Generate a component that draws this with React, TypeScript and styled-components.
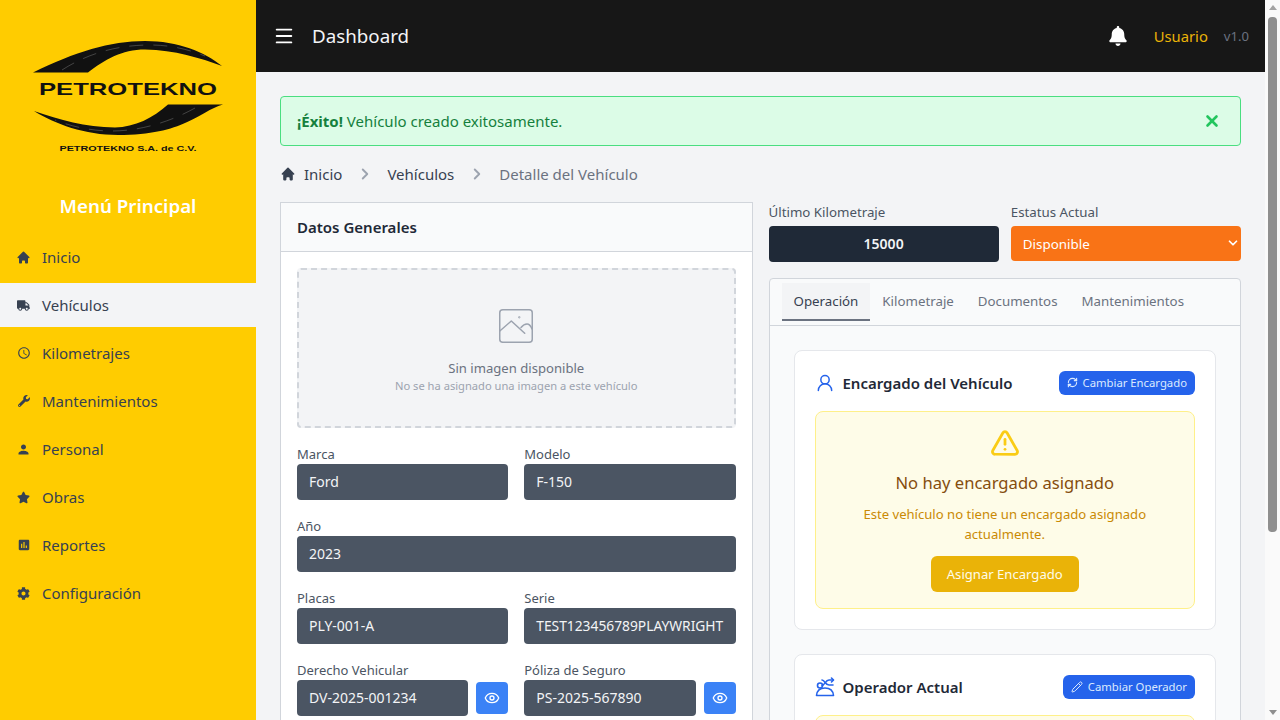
import React from 'react';
import styled, { createGlobalStyle } from 'styled-components';
import { ChevronDown, ChevronRight, Eye, Menu, Pencil, RefreshCw, TriangleAlert, UserRound, X } from 'lucide-react';
import { FaBell, FaCog, FaStar, FaTruck, FaWrench } from 'react-icons/fa';
import { HiHome } from 'react-icons/hi';
import { MdAccessTime, MdAssessment, MdPerson } from 'react-icons/md';

const GlobalStyle = createGlobalStyle`
    * {
        box-sizing: border-box;
    }

    body {
        margin: 0;
        background: #f3f4f6;
        font-family: 'Noto Sans', sans-serif;
        color: #374151;
    }
`;

const navItems = [
    { label: 'Inicio', icon: <HiHome size={15} /> },
    { label: 'Vehículos', icon: <FaTruck size={13} />, active: true },
    { label: 'Kilometrajes', icon: <MdAccessTime size={14} /> },
    { label: 'Mantenimientos', icon: <FaWrench size={12} /> },
    { label: 'Personal', icon: <MdPerson size={15} /> },
    { label: 'Obras', icon: <FaStar size={13} /> },
    { label: 'Reportes', icon: <MdAssessment size={14} /> },
    { label: 'Configuración', icon: <FaCog size={13} /> },
];

const Logo = () => (
    <svg width="256" height="170" viewBox="0 0 256 170">
        <path d="M33 72.5C75 52 110 41 145 41C178 41 205 52 222 66C200 58 175 50 145 49.5C122 49.5 104 60 88 72.5Z" fill="#111" />
        <path d="M223 104.5C198 112 185 135 118 135C85 135 55 124 34 111C60 120 85 127 115 127.5C135 127 153 118 168 104.5Z" fill="#111" />
        <path d="M62 70C90 52 120 45 150 45C172 45 190 50 205 56" fill="none" stroke="#777" strokeWidth="0.5" strokeDasharray="14 10" />
        <path d="M195 108C170 122 140 131 112 131C90 131 70 126 55 120" fill="none" stroke="#777" strokeWidth="0.5" strokeDasharray="14 10" />
        <text x="128" y="95" textAnchor="middle" textLength="178" lengthAdjust="spacingAndGlyphs" fontFamily="Liberation Sans" fontWeight="700" fontSize="17" fill="#111">
            PETROTEKNO
        </text>
        <text x="128" y="151" textAnchor="middle" textLength="137" lengthAdjust="spacingAndGlyphs" fontFamily="Liberation Sans" fontWeight="700" fontSize="8" fill="#111">
            PETROTEKNO S.A. de C.V.
        </text>
    </svg>
);

const NoImageIcon = () => (
    <svg width="34" height="34" viewBox="0 0 34 34" fill="none" stroke="#9ca3af" strokeWidth="1.5" strokeLinecap="round" strokeLinejoin="round">
        <rect x="0.75" y="0.75" width="32.5" height="32.5" rx="3" />
        <path d="M0.8 22L12.3 12L25.7 24.3" />
        <path d="M22 18.5C24 16 26 15 28 15C30 15 32 17.5 33 20" />
        <circle cx="20.3" cy="8.3" r="0.4" />
    </svg>
);

const OperatorIcon = () => (
    <svg width="20" height="20" viewBox="0 0 20 20" fill="none" stroke="#2563eb" strokeWidth="1.6" strokeLinecap="round" strokeLinejoin="round">
        <path d="M1.5 18.5C2 13 6 11 10 11C14 11 18 13 18.5 18.5Z" />
        <circle cx="5" cy="8.5" r="2.5" />
        <path d="M7 3C10 3 10 8 14 8H18" />
        <path d="M7 8.5C9.5 8.5 10.5 3 14 3H18" />
        <path d="M16.5 1L18.5 3L16.5 5" />
    </svg>
);

const Warning = ({ title, text, action }: { title: string; text: string; action: string }) => (
    <WarningBox>
        <TriangleAlert size={30} color="#facc15" strokeWidth={2.2} />
        <WarningTitle>{title}</WarningTitle>
        <WarningText>{text}</WarningText>
        <WarningButton>{action}</WarningButton>
    </WarningBox>
);

const App = () => {
    return (
        <Page>
            <GlobalStyle />
            <Sidebar>
                <LogoWrap>
                    <Logo />
                </LogoWrap>
                <MenuTitle>Menú Principal</MenuTitle>
                <Nav>
                    {navItems.map((item) => (
                        <NavItem key={item.label} $active={item.active}>
                            <NavIcon>{item.icon}</NavIcon>
                            {item.label}
                        </NavItem>
                    ))}
                </Nav>
            </Sidebar>
            <Main>
                <Topbar>
                    <Menu size={22} color="#fff" strokeWidth={2} />
                    <PageTitle>Dashboard</PageTitle>
                    <TopRight>
                        <FaBell size={20} color="#fff" />
                        <UserName>Usuario</UserName>
                        <Version>v1.0</Version>
                    </TopRight>
                </Topbar>
                <Content>
                    <Alert>
                        <AlertText>
                            <strong>¡Éxito!</strong> Vehículo creado exitosamente.
                        </AlertText>
                        <X size={18} color="#22c55e" strokeWidth={3.5} />
                    </Alert>
                    <Breadcrumb>
                        <HomeIcon size={16} color="#374151" />
                        <Crumb>Inicio</Crumb>
                        <ChevronRight size={18} color="#9ca3af" strokeWidth={2.5} />
                        <Crumb>Vehículos</Crumb>
                        <ChevronRight size={18} color="#9ca3af" strokeWidth={2.5} />
                        <Crumb $muted>Detalle del Vehículo</Crumb>
                    </Breadcrumb>
                    <Columns>
                        <Card>
                            <CardHeader>Datos Generales</CardHeader>
                            <CardBody>
                                <Placeholder>
                                    <NoImageIcon />
                                    <PlaceholderTitle>Sin imagen disponible</PlaceholderTitle>
                                    <PlaceholderSub>No se ha asignado una imagen a este vehículo</PlaceholderSub>
                                </Placeholder>
                                <FieldGrid>
                                    <Field>
                                        <Label>Marca</Label>
                                        <Value>Ford</Value>
                                    </Field>
                                    <Field>
                                        <Label>Modelo</Label>
                                        <Value>F-150</Value>
                                    </Field>
                                    <Field $wide>
                                        <Label>Año</Label>
                                        <Value>2023</Value>
                                    </Field>
                                    <Field>
                                        <Label>Placas</Label>
                                        <Value>PLY-001-A</Value>
                                    </Field>
                                    <Field>
                                        <Label>Serie</Label>
                                        <SerieValue>TEST123456789PLAYWRIGHT</SerieValue>
                                    </Field>
                                    <Field>
                                        <Label>Derecho Vehicular</Label>
                                        <ValueRow>
                                            <Value>DV-2025-001234</Value>
                                            <EyeButton>
                                                <Eye size={16} color="#fff" />
                                            </EyeButton>
                                        </ValueRow>
                                    </Field>
                                    <Field>
                                        <Label>Póliza de Seguro</Label>
                                        <ValueRow>
                                            <Value>PS-2025-567890</Value>
                                            <EyeButton>
                                                <Eye size={16} color="#fff" />
                                            </EyeButton>
                                        </ValueRow>
                                    </Field>
                                </FieldGrid>
                            </CardBody>
                        </Card>
                        <RightColumn>
                            <StatsRow>
                                <div>
                                    <StatLabel>Último Kilometraje</StatLabel>
                                    <Mileage>15000</Mileage>
                                </div>
                                <div>
                                    <StatLabel>Estatus Actual</StatLabel>
                                    <StatusSelect>
                                        Disponible
                                        <StatusChevron>
                                            <ChevronDown size={14} color="#fff" strokeWidth={3} />
                                        </StatusChevron>
                                    </StatusSelect>
                                </div>
                            </StatsRow>
                            <TabsCard>
                                <TabBar>
                                    <Tab $active>Operación</Tab>
                                    <Tab>Kilometraje</Tab>
                                    <Tab>Documentos</Tab>
                                    <Tab>Mantenimientos</Tab>
                                </TabBar>
                                <TabBody>
                                    <Panel>
                                        <PanelHeader>
                                            <PanelTitle>
                                                <UserRound size={20} color="#2563eb" strokeWidth={1.8} />
                                                Encargado del Vehículo
                                            </PanelTitle>
                                            <SmallButton>
                                                <RefreshCw size={11} strokeWidth={2.5} />
                                                Cambiar Encargado
                                            </SmallButton>
                                        </PanelHeader>
                                        <Warning
                                            title="No hay encargado asignado"
                                            text="Este vehículo no tiene un encargado asignado actualmente."
                                            action="Asignar Encargado"
                                        />
                                    </Panel>
                                    <Panel>
                                        <PanelHeader>
                                            <PanelTitle>
                                                <OperatorIcon />
                                                Operador Actual
                                            </PanelTitle>
                                            <SmallButton>
                                                <Pencil size={12} />
                                                Cambiar Operador
                                            </SmallButton>
                                        </PanelHeader>
                                        <Warning
                                            title="No hay operador asignado"
                                            text="Este vehículo no tiene un operador asignado actualmente."
                                            action="Asignar Operador"
                                        />
                                    </Panel>
                                </TabBody>
                            </TabsCard>
                        </RightColumn>
                    </Columns>
                </Content>
            </Main>
            <ScrollTrack>
                <ArrowUp />
                <ScrollThumb />
                <ArrowDown />
            </ScrollTrack>
        </Page>
    );
};

export default App;

const Page = styled.div`
    display: flex;
    min-height: 100vh;
    align-items: flex-start;
`;

const Sidebar = styled.aside`
    position: sticky;
    top: 0;
    flex: 0 0 256px;
    height: 100vh;
    background: #ffcc00;
`;

const LogoWrap = styled.div`
    height: 170px;

    svg {
        display: block;
    }
`;

const MenuTitle = styled.h2`
    margin: 20px 0 13px;
    font-size: 18.75px;
    line-height: 32px;
    font-weight: 600;
    text-align: center;
    color: #fff;
`;

const Nav = styled.nav`
    display: flex;
    flex-direction: column;
    gap: 4px;
`;

const NavItem = styled.div<{ $active?: boolean }>`
    display: flex;
    align-items: center;
    height: 44px;
    padding-left: 16px;
    font-size: 15px;
    color: #374151;
    background: ${(p) => (p.$active ? '#f3f4f6' : 'transparent')};
`;

const NavIcon = styled.span`
    display: flex;
    justify-content: center;
    width: 15px;
    margin-right: 11px;
    color: #374151;
`;

const Main = styled.div`
    flex: 1;
    min-width: 0;
`;

const Topbar = styled.header`
    display: flex;
    align-items: center;
    height: 72px;
    padding: 0 16px 0 17px;
    background: #171717;
`;

const PageTitle = styled.h1`
    margin: 0 0 2px 17px;
    font-size: 18.75px;
    font-weight: 400;
    color: #f3f4f6;
`;

const TopRight = styled.div`
    display: flex;
    align-items: center;
    margin-left: auto;
`;

const UserName = styled.span`
    margin-left: 26px;
    font-size: 14.8px;
    color: #eab308;
`;

const Version = styled.span`
    margin-left: 16px;
    font-size: 13.1px;
    color: #6b7280;
`;

const Content = styled.main`
    padding: 24px;
`;

const Alert = styled.div`
    display: flex;
    align-items: center;
    justify-content: space-between;
    height: 50px;
    padding: 0 19px 0 16px;
    border: 1px solid #4ade80;
    border-radius: 4px;
    background: #dcfce7;
`;

const AlertText = styled.span`
    font-size: 15px;
    color: #15803d;

    strong {
        font-weight: 700;
    }
`;

const Breadcrumb = styled.div`
    display: flex;
    align-items: center;
    height: 24px;
    margin: 16px 0 16px;
    gap: 13px;
`;

const HomeIcon = styled(HiHome)`
    margin-right: -5px;
`;

const Crumb = styled.span<{ $muted?: boolean }>`
    margin-right: ${(p) => (p.$muted ? 0 : 1)}px;
    font-size: 15px;
    color: ${(p) => (p.$muted ? '#6b7280' : '#374151')};
`;

const Columns = styled.div`
    display: grid;
    grid-template-columns: 1fr 1fr;
    gap: 16px;
    align-items: start;
`;

const Card = styled.section`
    border: 1px solid #d1d5db;
    background: #fff;
`;

const CardHeader = styled.div`
    height: 49px;
    padding: 0 16px;
    line-height: 48px;
    font-size: 15px;
    font-weight: 600;
    color: #1f2937;
    background: #f9fafb;
    border-bottom: 1px solid #d1d5db;
`;

const CardBody = styled.div`
    padding: 16px;
`;

const Placeholder = styled.div`
    display: flex;
    flex-direction: column;
    align-items: center;
    height: 160px;
    padding-top: 39px;
    border: 2px dashed #d1d5db;
    border-radius: 4px;
    background: #f3f4f6;
`;

const PlaceholderTitle = styled.div`
    margin-top: 15px;
    font-size: 13.1px;
    line-height: 20px;
    color: #6b7280;
`;

const PlaceholderSub = styled.div`
    font-size: 11.15px;
    line-height: 16px;
    color: #9ca3af;
`;

const FieldGrid = styled.div`
    display: grid;
    grid-template-columns: 1fr 1fr;
    gap: 16px;
    margin-top: 16px;
`;

const Field = styled.div<{ $wide?: boolean }>`
    grid-column: ${(p) => (p.$wide ? '1 / -1' : 'auto')};
    min-width: 0;
`;

const Label = styled.div`
    font-size: 13px;
    line-height: 20px;
    color: #4b5563;
`;

const Value = styled.div`
    flex: 1;
    min-width: 0;
    height: 36px;
    padding: 0 12px;
    line-height: 36px;
    font-size: 14px;
    white-space: nowrap;
    overflow: hidden;
    color: #f3f4f6;
    background: #4b5563;
    border-radius: 4px;
`;

const SerieValue = styled(Value)`
    font-size: 13.8px;
`;

const ValueRow = styled.div`
    display: flex;
    align-items: center;
    gap: 8px;
`;

const EyeButton = styled.button`
    display: flex;
    align-items: center;
    justify-content: center;
    flex: 0 0 32px;
    height: 32px;
    padding: 0;
    border: 0;
    border-radius: 4px;
    background: #3b82f6;
`;

const RightColumn = styled.div`
    min-width: 0;
`;

const StatsRow = styled.div`
    display: grid;
    grid-template-columns: 1fr 1fr;
    gap: 12px;
    margin-bottom: 16px;
`;

const StatLabel = styled.div`
    height: 24px;
    font-size: 13.3px;
    line-height: 20px;
    color: #4b5563;
`;

const Mileage = styled.div`
    height: 36px;
    line-height: 36px;
    text-align: center;
    font-size: 14px;
    font-weight: 600;
    color: #f3f4f6;
    background: #1f2937;
    border-radius: 4px;
`;

const StatusSelect = styled.div`
    position: relative;
    height: 35px;
    padding: 0 12px;
    line-height: 36px;
    font-size: 13.4px;
    color: #fff;
    background: #f97316;
    border-radius: 4px;
`;

const StatusChevron = styled.span`
    position: absolute;
    top: 10px;
    right: 1px;
    display: flex;
`;

const TabsCard = styled.section`
    border: 1px solid #d1d5db;
    border-radius: 4px;
    background: #f9fafb;
`;

const TabBar = styled.div`
    display: flex;
    height: 47px;
    padding: 4px 12px 0;
    border-bottom: 1px solid #d1d5db;
`;

const Tab = styled.div<{ $active?: boolean }>`
    height: 38px;
    padding: 0 12px;
    line-height: 36px;
    font-size: 13.3px;
    color: ${(p) => (p.$active ? '#374151' : '#6b7280')};
    background: ${(p) => (p.$active ? '#f3f4f6' : 'transparent')};
    border-bottom: 2px solid ${(p) => (p.$active ? '#6b7280' : 'transparent')};
`;

const TabBody = styled.div`
    display: flex;
    flex-direction: column;
    gap: 24px;
    padding: 24px;
`;

const Panel = styled.div`
    padding: 20px;
    background: #fff;
    border: 1px solid #e5e7eb;
    border-radius: 8px;
`;

const PanelHeader = styled.div`
    display: flex;
    align-items: center;
    justify-content: space-between;
    height: 24px;
    margin-bottom: 16px;
`;

const PanelTitle = styled.h3`
    display: flex;
    align-items: center;
    gap: 8px;
    margin: 0;
    font-size: 15px;
    font-weight: 600;
    color: #1f2937;
`;

const SmallButton = styled.button`
    display: flex;
    align-items: center;
    gap: 5px;
    height: 24px;
    padding: 0 8px 1px;
    border: 0;
    border-radius: 6px;
    font-family: inherit;
    font-size: 11.3px;
    color: #dbeafe;
    background: #2563eb;
`;

const WarningBox = styled.div`
    display: flex;
    flex-direction: column;
    align-items: center;
    padding: 16px 24px 16px;
    text-align: center;
    background: #fefce8;
    border: 1px solid #fef08a;
    border-radius: 8px;
`;

const WarningTitle = styled.div`
    margin-top: 11px;
    font-size: 16.6px;
    line-height: 28px;
    color: #854d0e;
`;

const WarningText = styled.p`
    margin: 7px 0 12px;
    font-size: 13.1px;
    line-height: 20px;
    color: #ca8a04;
`;

const WarningButton = styled.button`
    height: 36px;
    padding: 0 16px;
    border: 0;
    border-radius: 6px;
    font-family: inherit;
    font-size: 13.1px;
    color: #fefce8;
    background: #eab308;
`;

const ScrollTrack = styled.div`
    position: sticky;
    top: 0;
    flex: 0 0 15px;
    display: flex;
    flex-direction: column;
    align-items: center;
    height: 100vh;
    background: #fafafa;
`;

const ArrowUp = styled.div`
    margin-top: 5px;
    border-left: 4px solid transparent;
    border-right: 4px solid transparent;
    border-bottom: 5px solid #a3a3a3;
`;

const ScrollThumb = styled.div`
    width: 9px;
    height: 515px;
    margin-top: 7px;
    border-radius: 4px;
    background: #8f8f8f;
`;

const ArrowDown = styled.div`
    margin-top: auto;
    margin-bottom: 5px;
    border-left: 4px solid transparent;
    border-right: 4px solid transparent;
    border-top: 5px solid #8f8f8f;
`;
